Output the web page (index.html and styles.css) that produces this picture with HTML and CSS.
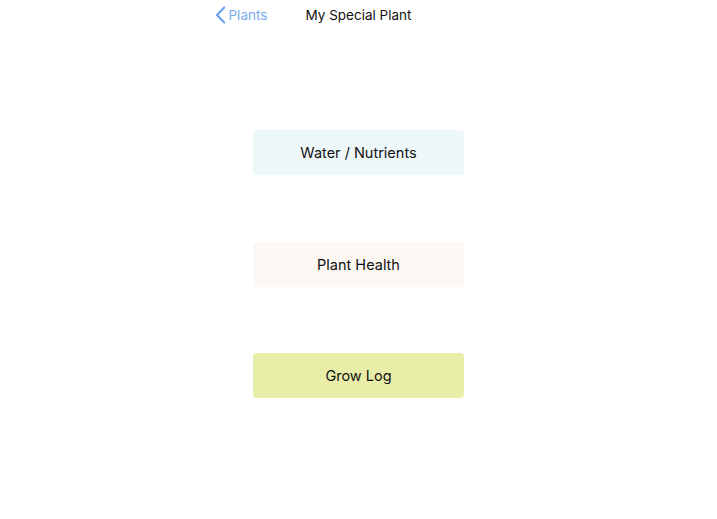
FILE: index.html
```html
<!DOCTYPE html>
<html>
<head>
<meta charset="utf-8">
<link rel="stylesheet" href="styles.css">
</head>
<body>
<header class="nav">
  <a class="back" href="#">
    <svg class="chev" width="11" height="18" viewBox="0 0 11 18"><path d="M9.2 1.5 L2 9 L9.2 16.5" fill="none" stroke="#6ea4ef" stroke-width="2.2" stroke-linecap="round" stroke-linejoin="round"/></svg>
    <span>Plants</span>
  </a>
  <div class="title">My Special Plant</div>
  <div></div>
</header>
<main class="menu">
  <button class="btn water">Water / Nutrients</button>
  <button class="btn health">Plant Health</button>
  <button class="btn log">Grow Log</button>
</main>
</body>
</html>
```
FILE: styles.css
```css
html, body {
  margin: 0;
  padding: 0;
  background: #ffffff;
  font-family: Inter, "Noto Sans", "Liberation Sans", sans-serif;
}
.nav {
  width: 292px;
  margin: 0 auto;
  height: 30px;
  display: grid;
  grid-template-columns: 1fr auto 1fr;
  align-items: center;
}
.back {
  display: flex;
  align-items: center;
  gap: 3px;
  color: #7aabf0;
  text-decoration: none;
  font-size: 13.5px;
  padding-left: 2px;
}
.chev { display: block; }
.title {
  font-size: 13.5px;
  color: #111;
  text-align: center;
}
.menu {
  display: flex;
  flex-direction: column;
  align-items: center;
  gap: 66.5px;
  padding-top: 100px;
}
.btn {
  width: 211px;
  height: 45px;
  border: none;
  border-radius: 4px;
  font-family: inherit;
  font-size: 14.5px;
  color: #111;
  padding: 0;
}
.water { background: #eef8fb; }
.health { background: #fef8f4; }
.log { background: #e8eda8; }
```
